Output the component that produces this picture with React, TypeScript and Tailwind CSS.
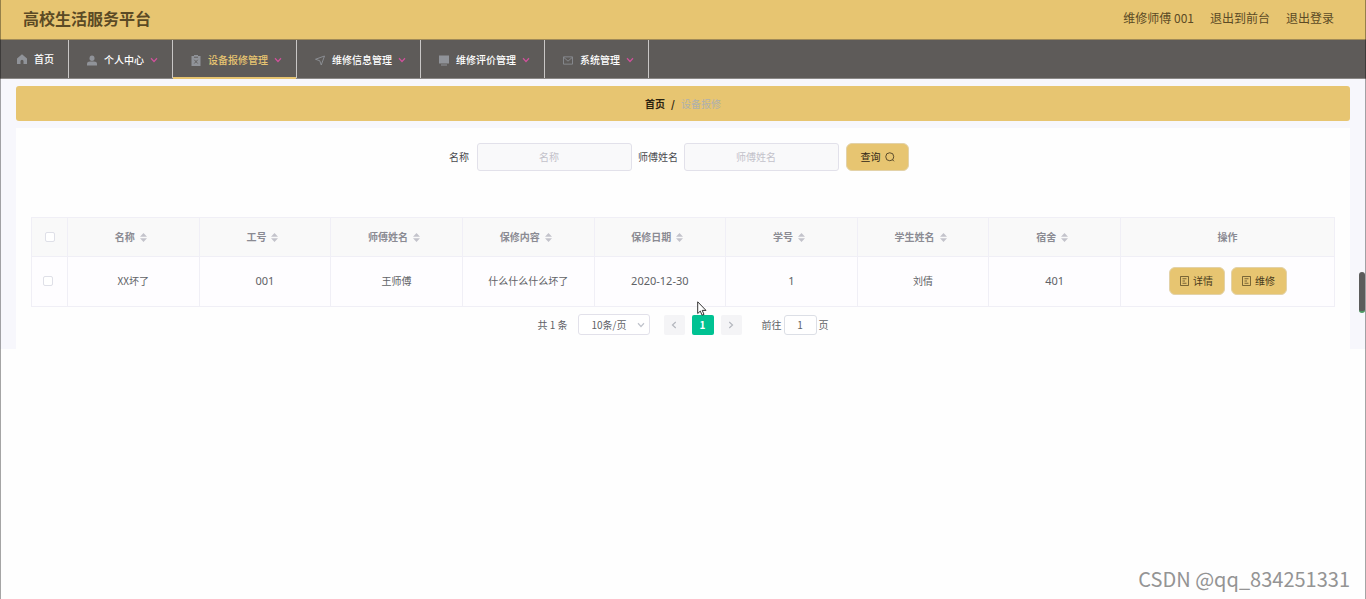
import React from 'react';

type IconProps = { className?: string };

const HomeIcon = ({ className }: IconProps) => (
  <svg viewBox="0 0 20 20" className={className} fill="currentColor" aria-hidden="true">
    <path d="M10 0.500 0 9v11h7v-5.500a3 3 0 0 1 6 0V20h7V9z" />
  </svg>
);

const UserIcon = ({ className }: IconProps) => (
  <svg viewBox="0 0 20 20" className={className} fill="currentColor" aria-hidden="true">
    <ellipse cx="10" cy="5.400" rx="5" ry="5.400" />
    <path d="M0 20v-3.500C0 13.500 3 12 6 12h8c3 0 6 1.500 6 4.500V20z" />
  </svg>
);

const ClipboardIcon = ({ className }: IconProps) => (
  <svg viewBox="0 0 20 22" className={className} aria-hidden="true">
    <path fill="currentColor" d="M1 2h5V0h8v2h5v20H1z" />
    <path d="M6 4.500h8M6.500 9.500l7 7.500M13.500 9.500l-7 7.500" stroke="#5e5b59" strokeWidth="1.800" fill="none" />
  </svg>
);

const SendIcon = ({ className }: IconProps) => (
  <svg viewBox="0 0 20 20" className={className} fill="none" stroke="currentColor" strokeWidth="1.800" aria-hidden="true">
    <path d="M1 7.500 19 1 12.500 19 9.500 10.500z" />
  </svg>
);

const MonitorIcon = ({ className }: IconProps) => (
  <svg viewBox="0 0 20 20" className={className} fill="currentColor" aria-hidden="true">
    <path d="M0 0h20v16H0zM4 18h12v2H4z" />
  </svg>
);

const MailIcon = ({ className }: IconProps) => (
  <svg viewBox="0 0 22 18" className={className} fill="none" stroke="currentColor" strokeWidth="1.800" aria-hidden="true">
    <path d="M1 1h20v16H1zM2 2.500l9 8 9-8" />
  </svg>
);

const Chevron = ({ className }: IconProps) => (
  <svg viewBox="0 0 16 16" className={className} fill="none" stroke="currentColor" strokeWidth="2.400" aria-hidden="true">
    <path d="M2 4.500 8 11l6-6.500" />
  </svg>
);

const SearchIcon = ({ className }: IconProps) => (
  <svg viewBox="0 0 20 20" className={className} fill="none" stroke="currentColor" strokeWidth="1.500" aria-hidden="true">
    <circle cx="9.500" cy="9.500" r="8" />
    <path d="M15 15.500l3 3" />
  </svg>
);

const TicketIcon = ({ className }: IconProps) => (
  <svg viewBox="0 0 18 20" className={className} fill="none" stroke="currentColor" strokeWidth="1.400" aria-hidden="true">
    <path d="M1 1h16v18H1zM5 5.500h8M5 10h5M5 14.500h8" />
  </svg>
);

const SortIcon = ({ className }: IconProps) => (
  <svg viewBox="0 0 7 9" className={className} fill="currentColor" aria-hidden="true">
    <path d="M3.500 0 7 3.800H0zM3.500 9 0 5.200h7z" />
  </svg>
);

const menus = [
  { label: '个人中心', Icon: UserIcon, active: false },
  { label: '设备报修管理', Icon: ClipboardIcon, active: true },
  { label: '维修信息管理', Icon: SendIcon, active: false },
  { label: '维修评价管理', Icon: MonitorIcon, active: false },
  { label: '系统管理', Icon: MailIcon, active: false },
];

const columns = ['名称', '工号', '师傅姓名', '保修内容', '保修日期', '学号', '学生姓名', '宿舍'];
const rows = [['XX坏了', '001', '王师傅', '什么什么什么坏了', '2020-12-30', '1', '刘倩', '401']];

const isNumeric = (value: string) => /^[\d-]+$/.test(value);

const checkboxClass =
  'block mx-auto size-[10px] appearance-none rounded-[2px] border border-[#dfe0e8] bg-white checked:bg-[#00c292]';
const fieldClass =
  'h-7 w-[155px] rounded-[3px] border border-[#e2e1ea] bg-[#f9f9fa] pb-[2px] pr-[11px] text-center text-[#606266] outline-none placeholder:text-[#c3c2ca]';

function TopBar() {
  return (
    <header className="flex h-10 items-center justify-between border-b border-[#a08a58] bg-[#e7c571] pb-[3px] pl-[23px] pr-8 text-[#5b4a25]">
      <h1 className="text-base font-bold">高校生活服务平台</h1>
      <div className="flex items-center gap-4 text-xs">
        <span>维修师傅 001</span>
        <a href="#front">退出到前台</a>
        <a href="#logout">退出登录</a>
      </div>
    </header>
  );
}

function NavBar() {
  return (
    <nav className="flex h-[39px] border-b border-[#8a8886] bg-[#5e5b59] font-medium text-white">
      <a href="#home" className="flex items-center gap-[7px] border-r border-[#c9c7c6] pl-[17px] pr-[14px]">
        <HomeIcon className="size-[10px] text-[#909399]" />
        首页
      </a>
      {menus.map(({ label, Icon, active }) => (
        <button
          key={label}
          type="button"
          className={
            active
              ? 'relative flex items-center border-r border-[#c9c7c6] pl-[18px] pr-[14px] pt-[2px] text-[#e7c571] after:absolute after:inset-x-0 after:-bottom-px after:h-[2px] after:bg-[#e7c571]'
              : 'flex items-center border-r border-[#c9c7c6] pl-[18px] pr-[14px] pt-[2px]'
          }
        >
          <Icon className="mr-[7px] h-[11px] w-[10px] text-[#909399]" />
          {label}
          <Chevron className="ml-[6px] size-2 text-[#d0519b]" />
        </button>
      ))}
    </nav>
  );
}

function SearchForm() {
  return (
    <form className="flex items-center justify-center pr-2 text-[#4a4a4e]" onSubmit={(e) => e.preventDefault()}>
      <label htmlFor="name" className="mr-2">
        名称
      </label>
      <input id="name" type="text" placeholder="名称" className={fieldClass} />
      <label htmlFor="master" className="mx-[6px]">
        师傅姓名
      </label>
      <input id="master" type="text" placeholder="师傅姓名" className={fieldClass} />
      <button
        type="submit"
        className="ml-[7px] flex h-7 w-[63px] items-center justify-center gap-1 rounded-md border border-[#e3d2a8] bg-[#e7c571] text-[#2f2615]"
      >
        查询
        <SearchIcon className="size-[10px]" />
      </button>
    </form>
  );
}

function RepairTable() {
  return (
    <table className="w-full table-fixed border-collapse text-center text-[#606266]">
      <colgroup>
        <col className="w-9" />
        {columns.map((c) => (
          <col key={c} />
        ))}
        <col className="w-[214px]" />
      </colgroup>
      <thead className="bg-[#f9f9f9] text-[#8b8b93]">
        <tr className="h-[39px]">
          <th className="border border-[#f0eff6]">
            <input type="checkbox" aria-label="全选" className={checkboxClass} />
          </th>
          {columns.map((c) => (
            <th key={c} className="border border-[#f0eff6] pr-[5px] font-bold">
              <button type="button" className="mx-auto flex items-center gap-[5px]">
                {c}
                <SortIcon className="h-[9px] w-[7px] text-[#c3c3cb]" />
              </button>
            </th>
          ))}
          <th className="border border-[#f0eff6] font-bold">操作</th>
        </tr>
      </thead>
      <tbody className="bg-[#fefdff]">
        {rows.map((row) => (
          <tr key={row[1]} className="h-[50px]">
            <td className="border border-[#f0eff6] pb-[2px] pr-[3px]">
              <input type="checkbox" aria-label="选择" className={checkboxClass} />
            </td>
            {row.map((value, i) => (
              <td
                key={columns[i]}
                className={
                  isNumeric(value)
                    ? "border border-[#f0eff6] pb-[2px] font-['Noto_Sans',sans-serif] text-[11px]"
                    : 'border border-[#f0eff6] pb-[2px]'
                }
              >
                {value}
              </td>
            ))}
            <td className="border border-[#f0eff6] pb-[2px]">
              <div className="flex justify-center gap-[6px]">
                {['详情', '维修'].map((label) => (
                  <button
                    key={label}
                    type="button"
                    className="flex h-7 w-14 items-center justify-center gap-1 rounded-md border border-[#e3d2a8] bg-[#e7c571] text-[#4a3c1c]"
                  >
                    <TicketIcon className="h-[10px] w-[9px]" />
                    {label}
                  </button>
                ))}
              </div>
            </td>
          </tr>
        ))}
      </tbody>
    </table>
  );
}

function Pagination() {
  return (
    <div className="mt-[7px] flex items-center justify-center text-[#606266]">
      <span className="mr-[10px]">共 1 条</span>
      <div className="relative mr-[14px]">
        <select
          aria-label="每页条数"
          className="block h-[21px] w-[72px] appearance-none rounded-[3px] border border-[#e2e1ea] bg-white pl-[13px] outline-none"
        >
          <option>10条/页</option>
          <option>20条/页</option>
        </select>
        <Chevron className="pointer-events-none absolute right-[5px] top-[7px] size-2 text-[#c0c4cc]" />
      </div>
      <div className="flex gap-[7px]">
        <button
          type="button"
          aria-label="上一页"
          className="flex h-5 w-[21px] items-center justify-center rounded-[2px] bg-[#f4f4f6]"
        >
          <Chevron className="size-2 rotate-90 text-[#b4b7be]" />
        </button>
        <button
          type="button"
          className="flex h-5 w-[22px] items-center justify-center rounded-[2px] bg-[#00c292] font-bold text-white"
        >
          1
        </button>
        <button
          type="button"
          aria-label="下一页"
          className="flex h-5 w-[21px] items-center justify-center rounded-[2px] bg-[#f4f4f6]"
        >
          <Chevron className="size-2 -rotate-90 text-[#b4b7be]" />
        </button>
      </div>
      <label htmlFor="page" className="ml-5">
        前往
      </label>
      <input
        id="page"
        type="text"
        defaultValue="1"
        className="mx-[2px] h-5 w-[33px] rounded-[3px] border border-[#dcdfe6] bg-white text-center outline-none"
      />
      <span>页</span>
    </div>
  );
}

export default function App() {
  return (
    <div className="relative flex min-h-screen flex-col bg-[#fefefe] font-['Noto_Sans_CJK_SC','Noto_Sans',sans-serif] text-[10px] leading-4">
      <TopBar />
      <NavBar />
      <main className="bg-[#f7f7fc] px-4 pt-[7px]">
        <div className="mb-[7px] flex h-[35px] items-center justify-center rounded-[3px] bg-[#e7c571]">
          <a href="#home" className="font-bold text-[#2b2310]">
            首页
          </a>
          <span className="mx-[6px] font-bold text-[#2b2310]">/</span>
          <span className="text-[#aeb0ae]">设备报修</span>
        </div>
        <section className="bg-[#fefefe] px-[15px] pb-[14px] pt-[15px]">
          <SearchForm />
          <div className="mt-[46px]">
            <RepairTable />
          </div>
          <Pagination />
        </section>
      </main>
      <footer className="mt-auto pb-[6px] pr-4 text-right text-xl leading-7 text-[#949494]">
        CSDN @qq_834251331
      </footer>
      <div className="pointer-events-none absolute inset-0 border-x border-black/35" />
      <div className="absolute right-px top-[272px] h-[41px] w-[6px] rounded-full border-b-2 border-[#4c9a63] bg-[#5c5c5c]" />
      <svg viewBox="0 0 10 15" className="pointer-events-none absolute left-[697px] top-[301px] h-[15px] w-[10px]" aria-hidden="true">
        <path d="M.7.8v11.700l2.600-2.400 1.800 4.100 1.900-.8-1.800-4H9z" fill="#fff" stroke="#333" strokeWidth="1" />
      </svg>
    </div>
  );
}
